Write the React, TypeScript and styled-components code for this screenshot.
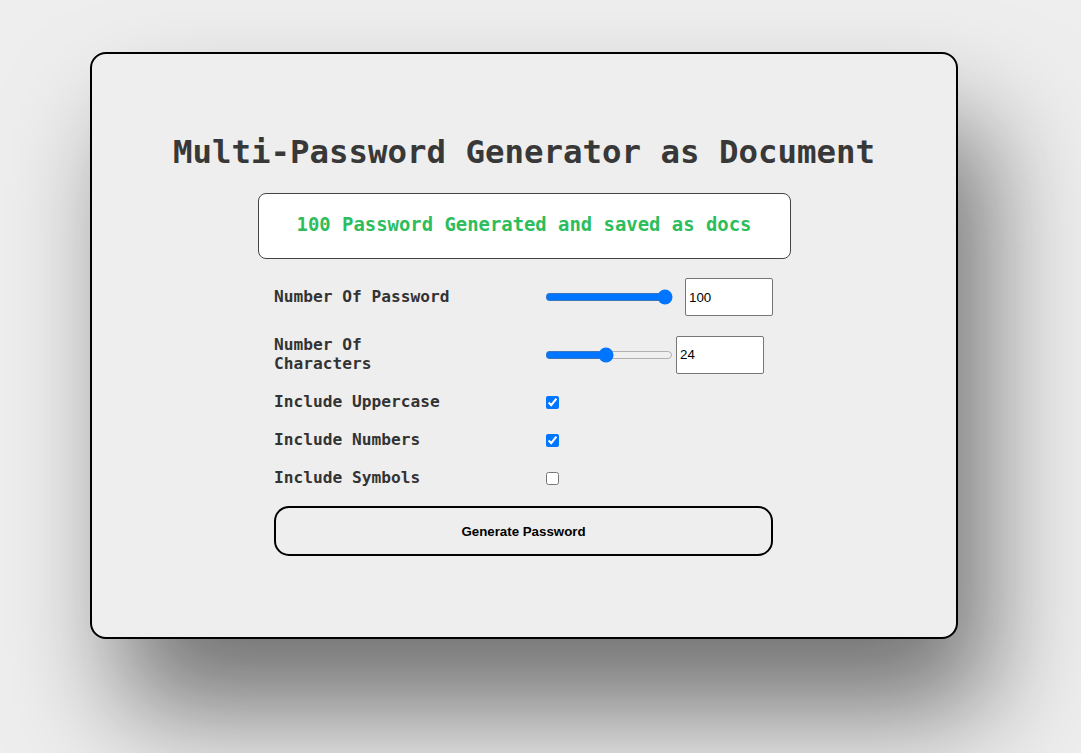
import React, { useState } from "react";
import styled, { createGlobalStyle } from "styled-components";

const GlobalStyle = createGlobalStyle`
  html, body {
    margin: 0;
    padding: 0;
    background-color: #eeeeee;
  }
  body {
    font-family: "DejaVu Sans Mono", "Liberation Mono", monospace;
    color: #333333;
    overflow: hidden;
  }
`;

const Page = styled.div`
  width: 100%;
  height: 753px;
  padding: 52px 0 0 90px;
  box-sizing: border-box;
`;

const Card = styled.div`
  width: 868px;
  height: 587px;
  box-sizing: border-box;
  border: 2px solid #000;
  border-radius: 16px;
  background-color: #eeeeee;
  box-shadow: 30px 72px 110px rgba(0, 0, 0, 0.52);
  display: flex;
  flex-direction: column;
  align-items: center;
  padding-top: 74px;
`;

const Title = styled.h1`
  margin: 0 0 17px 0;
  font-size: 32.4px;
  font-weight: bold;
  line-height: 48px;
  color: #383838;
`;

const Message = styled.div`
  width: 533px;
  height: 66px;
  box-sizing: border-box;
  background-color: #fff;
  border: 1px solid #444;
  border-radius: 8px;
  display: flex;
  align-items: center;
  justify-content: center;
  padding-bottom: 5px;
  font-size: 18.9px;
  font-weight: bold;
  color: #2dbd5c;
  margin-bottom: 19px;
`;

const Form = styled.form`
  width: 500px;
  display: flex;
  flex-direction: column;
  gap: 19.6px;
`;

const Row = styled.div`
  display: grid;
  grid-template-columns: 271px 1fr;
  align-items: center;
`;

const Label = styled.label`
  max-width: 185px;
  font-size: 16.2px;
  font-weight: bold;
  line-height: 18.5px;
  color: #333;
`;

const Control = styled.div<{ $gap?: number }>`
  display: flex;
  align-items: center;
  gap: ${(p) => p.$gap ?? 0}px;
`;

const Range = styled.input`
  width: 128px;
  margin: 0;
  accent-color: #0075ff;
`;

const NumberBox = styled.input`
  width: 88px;
  height: 38px;
  box-sizing: border-box;
  padding: 1px 3px;
  border: 1px solid #767676;
  border-radius: 2px;
  font-family: "Liberation Sans", Arial, sans-serif;
  font-size: 13.3px;
  color: #000;
  background: #fff;
`;

const Check = styled.input`
  width: 13px;
  height: 13px;
  margin: 0 0 0 1px;
`;

const Button = styled.button`
  margin-top: -1px;
  width: 499px;
  height: 50px;
  box-sizing: border-box;
  border: 2px solid #000;
  border-radius: 15px;
  background: transparent;
  font-family: "Liberation Sans", Arial, sans-serif;
  font-size: 13.3px;
  font-weight: bold;
  color: #000;
  cursor: pointer;
`;

export default function App() {
  const [count, setCount] = useState(100);
  const [chars, setChars] = useState(24);
  const [upper, setUpper] = useState(true);
  const [nums, setNums] = useState(true);
  const [syms, setSyms] = useState(false);

  return (
    <>
      <GlobalStyle />
      <Page>
        <Card>
          <Title>Multi-Password Generator as Document</Title>
          <Message>{count} Password Generated and saved as docs</Message>
          <Form onSubmit={(e) => e.preventDefault()}>
            <Row>
              <Label>Number Of Password</Label>
              <Control $gap={12}>
                <Range
                  type="range"
                  min={1}
                  max={100}
                  value={count}
                  onChange={(e) => setCount(Number(e.target.value))}
                />
                <NumberBox
                  type="text"
                  value={count}
                  onChange={(e) => setCount(Number(e.target.value) || 0)}
                />
              </Control>
            </Row>
            <Row>
              <Label>Number Of Characters</Label>
              <Control $gap={3}>
                <Range
                  type="range"
                  min={1}
                  max={50}
                  value={chars}
                  onChange={(e) => setChars(Number(e.target.value))}
                />
                <NumberBox
                  type="text"
                  value={chars}
                  onChange={(e) => setChars(Number(e.target.value) || 0)}
                />
              </Control>
            </Row>
            <Row>
              <Label>Include Uppercase</Label>
              <Control>
                <Check type="checkbox" checked={upper} onChange={() => setUpper(!upper)} />
              </Control>
            </Row>
            <Row>
              <Label>Include Numbers</Label>
              <Control>
                <Check type="checkbox" checked={nums} onChange={() => setNums(!nums)} />
              </Control>
            </Row>
            <Row>
              <Label>Include Symbols</Label>
              <Control>
                <Check type="checkbox" checked={syms} onChange={() => setSyms(!syms)} />
              </Control>
            </Row>
            <Button type="submit">Generate Password</Button>
          </Form>
        </Card>
      </Page>
    </>
  );
}
